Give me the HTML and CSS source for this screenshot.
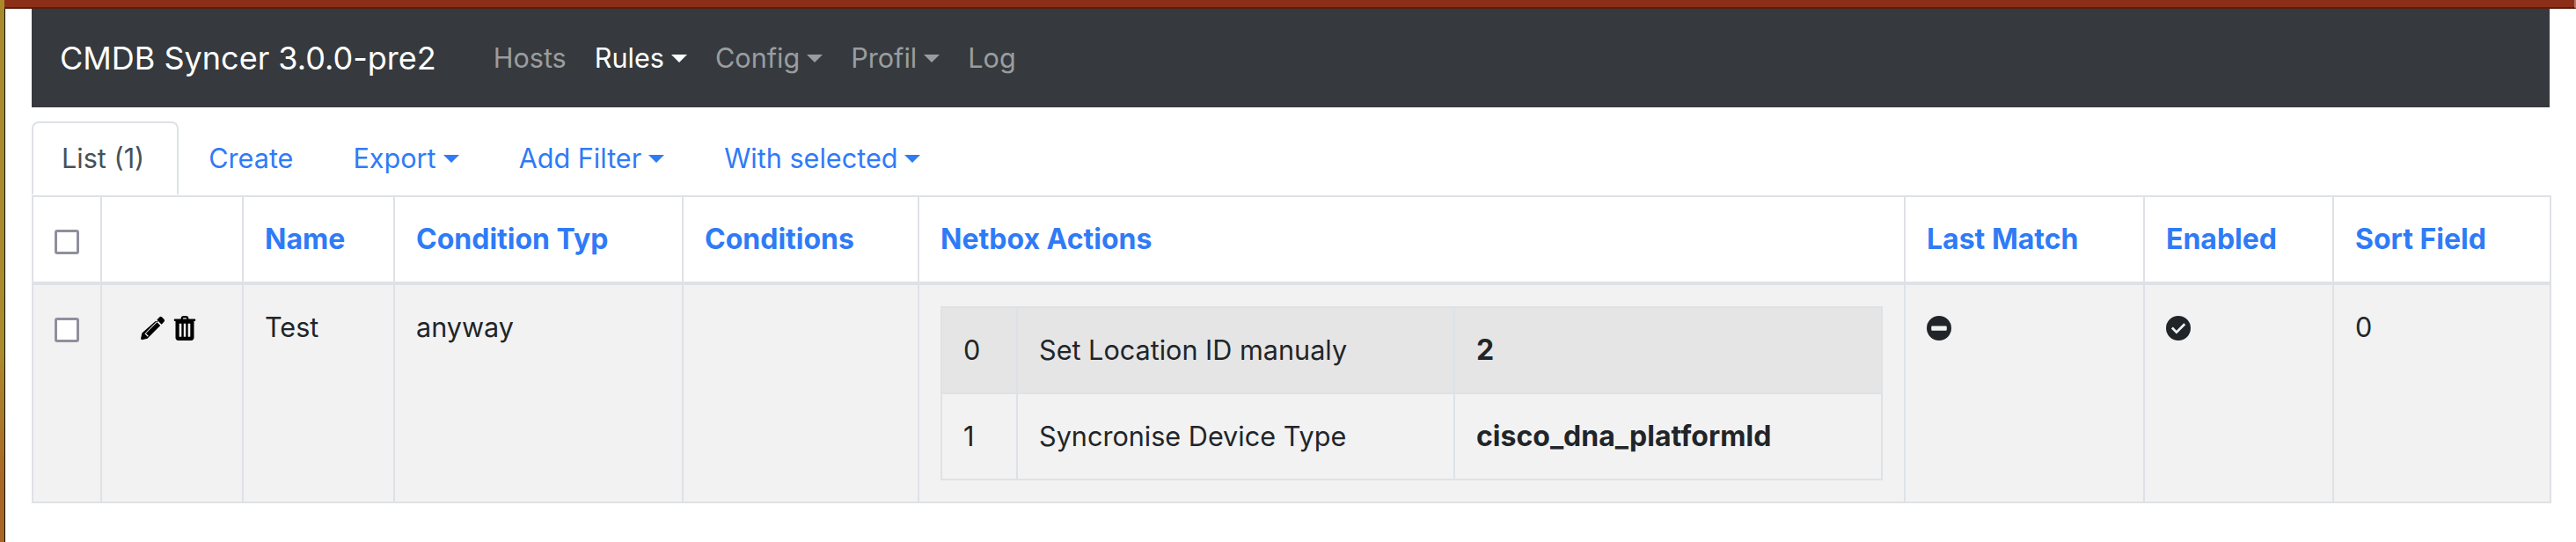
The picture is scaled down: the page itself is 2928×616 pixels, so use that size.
FILE: index.html
```html
<!DOCTYPE html>
<html lang="en">
<head>
  <meta charset="UTF-8">
  <meta name="viewport" content="width=device-width, initial-scale=1.0">
  <title>CMDB Syncer</title>
  <link rel="stylesheet" href="styles.css">
</head>
<body>
  <div class="sidestrip"></div>
  <div class="main">
    <div class="topband"></div>
    <div class="container">
      <nav class="navbar">
        <a class="brand" href="#">CMDB Syncer 3.0.0-pre2</a>
        <a class="nav-link" href="#">Hosts</a>
        <a class="nav-link active caret" href="#">Rules</a>
        <a class="nav-link caret" href="#">Config</a>
        <a class="nav-link caret" href="#">Profil</a>
        <a class="nav-link" href="#">Log</a>
      </nav>

      <ul class="tabs">
        <li class="tab active"><a href="#">List (1)</a></li>
        <li class="tab"><a href="#">Create</a></li>
        <li class="tab"><a class="caret" href="#">Export</a></li>
        <li class="tab"><a class="caret" href="#">Add Filter</a></li>
        <li class="tab"><a class="caret" href="#">With selected</a></li>
      </ul>

      <table class="list">
        <colgroup>
          <col class="c-check"><col class="c-actions"><col class="c-name"><col class="c-type">
          <col class="c-cond"><col class="c-netbox"><col class="c-match"><col class="c-enabled"><col class="c-sort">
        </colgroup>
        <thead>
          <tr>
            <th class="check"><span class="box"></span></th>
            <th></th>
            <th><a href="#">Name</a></th>
            <th><a href="#">Condition Typ</a></th>
            <th><a href="#">Conditions</a></th>
            <th><a href="#">Netbox Actions</a></th>
            <th><a href="#">Last Match</a></th>
            <th><a href="#">Enabled</a></th>
            <th><a href="#">Sort Field</a></th>
          </tr>
        </thead>
        <tbody>
          <tr>
            <td class="check"><span class="box"></span></td>
            <td>
              <div class="row-actions">
                <svg class="icon" viewBox="0 0 16 16"><path d="M12.100.9a1.200 1.200 0 0 1 1.700 0l1.300 1.300a1.200 1.200 0 0 1 0 1.700l-1.600 1.600-3-3zM9.700 3.300l3 3-8.400 8.400-3.600.8-.7-.7.8-3.600zM3 11l-.5.5 2 2 .5-.5zM3.200 10.800l7.600-7.600.4.4-7.600 7.600z" fill-rule="evenodd"/></svg>
                <svg class="icon" viewBox="0 0 16 16"><path d="M5.500 1.600C5.500.7 6.200 0 7.100 0h1.800c.9 0 1.600.7 1.600 1.600V2h3.800c.4 0 .7.300.7.700s-.3.700-.7.700H14v10.800c0 1-.8 1.800-1.800 1.800H3.800c-1 0-1.800-.8-1.800-1.800V3.400h-.3c-.4 0-.7-.3-.7-.7S1.300 2 1.700 2h3.800zM6.800 2h2.400v-.3c0-.2-.1-.4-.4-.4H7.200c-.2 0-.4.200-.4.400zM4.400 5v8.500h1.500V5zm2.900 0v8.500h1.400V5zm2.800 0v8.500h1.500V5z" fill-rule="evenodd"/></svg>
              </div>
            </td>
            <td>Test</td>
            <td>anyway</td>
            <td></td>
            <td>
              <table class="inner">
                <tr class="odd"><td>0</td><td>Set Location ID manualy</td><td><strong>2</strong></td></tr>
                <tr><td>1</td><td>Syncronise Device Type</td><td><strong>cisco_dna_platformId</strong></td></tr>
              </table>
            </td>
            <td>
              <svg class="icon status" viewBox="0 0 16 16"><path d="M8 0a8 8 0 1 1 0 16A8 8 0 0 1 8 0zM3.500 6.500c-.3 0-.5.200-.5.500v2c0 .3.200.5.500.5h9c.3 0 .5-.2.500-.5V7c0-.3-.2-.5-.5-.5z" fill-rule="evenodd"/></svg>
            </td>
            <td>
              <svg class="icon status" viewBox="0 0 16 16"><path d="M8 0a8 8 0 1 1 0 16A8 8 0 0 1 8 0zM12.700 5.800l-1.100-1.100-4.800 4.800-2.300-2.300-1.100 1.100 3.400 3.400z" fill-rule="evenodd"/></svg>
            </td>
            <td>0</td>
          </tr>
        </tbody>
      </table>
    </div>
  </div>
</body>
</html>
```

FILE: styles.css
```css
* {
  box-sizing: border-box;
}
html, body {
  height: 100%;
}
body {
  display: flex;
  margin: 0;
  background: #fff;
  font-family: Inter, "Liberation Sans", sans-serif;
  font-size: 30.6px;
  line-height: 48px;
  color: #212529;
  overflow: hidden;
}
a {
  text-decoration: none;
  color: #2f7bf6;
}
strong {
  font-size: 32px;
}
.sidestrip {
  width: 5px;
  background: linear-gradient(#a98a2a, #ab8a2a 65%, #a96524 90%);
}
.main {
  flex: 1;
}
.topband {
  height: 10px;
  background: #8c2f18;
  border-bottom: 2px solid #581c0e;
  border-right: 2px solid #b5776a;
}
.container {
  width: 2893px;
  height: 606px;
  padding-left: 30px;
  border-left: 1px solid #111;
}

/* top nav */
.navbar {
  display: flex;
  align-items: center;
  height: 112px;
  padding: 0 32px;
  background: #363a3e;
}
.brand {
  color: #fff;
  font-size: 36px;
  margin-right: 49px;
}
.nav-link {
  color: #9a9da0;
  padding: 0 16px;
}
.nav-link.active {
  color: #fff;
}
.caret::after {
  content: "";
  display: inline-block;
  margin-left: 8px;
  vertical-align: 6px;
  border-top: 9px solid;
  border-left: 9px solid transparent;
  border-right: 9px solid transparent;
}

/* tabs */
.tabs {
  display: flex;
  list-style: none;
  margin: 16px 0 0;
  padding: 0;
  height: 84px;
}
.tab a {
  display: block;
  padding: 16px 32px;
  height: 84px;
  border: 2px solid transparent;
}
.tab.active a {
  padding-right: 37px;
  color: #495057;
  border-color: #dee2e6 #dee2e6 #fff;
  border-radius: 8px 8px 0 0;
}

/* list table */
.list {
  width: 100%;
  table-layout: fixed;
  border-collapse: collapse;
}
.list > thead > tr > th,
.list > tbody > tr > td {
  border: 2px solid #dee2e6;
  padding: 24px;
  text-align: left;
  vertical-align: top;
}
.list > thead > tr > th {
  border-bottom-width: 4px;
  font-size: 32px;
  font-weight: 700;
}
.list > tbody > tr {
  background: #f2f2f2;
}
.c-check { width: 78px; }
.c-actions { width: 161px; }
.c-name { width: 172px; }
.c-type { width: 328px; }
.c-cond { width: 268px; }
.c-netbox { width: 1121px; }
.c-match { width: 272px; }
.c-enabled { width: 215px; }
.c-sort { width: 247px; }

.list > thead > tr > th.check,
.list > tbody > tr > td.check {
  padding-left: 0;
  padding-right: 0;
  text-align: center;
}
.box {
  display: inline-block;
  width: 28px;
  height: 28px;
  background: #fff;
  border: 3px solid #8f8f9d;
  border-radius: 3px;
  vertical-align: -6px;
}
.row-actions {
  display: flex;
  align-items: center;
  gap: 8px;
  height: 50px;
  padding-left: 20px;
}
.icon {
  width: 28px;
  height: 28px;
  fill: #000;
  vertical-align: -4px;
}
.status {
  fill: #212529;
}

/* nested actions table */
.inner {
  width: 100%;
  border-collapse: collapse;
}
.inner td {
  border: 2px solid #dee2e6;
  padding: 24px;
}
.inner .odd {
  background: #e5e5e5;
}
.inner td:first-child {
  width: 86px;
}
.inner td:nth-child(2) {
  width: 497px;
}
```
